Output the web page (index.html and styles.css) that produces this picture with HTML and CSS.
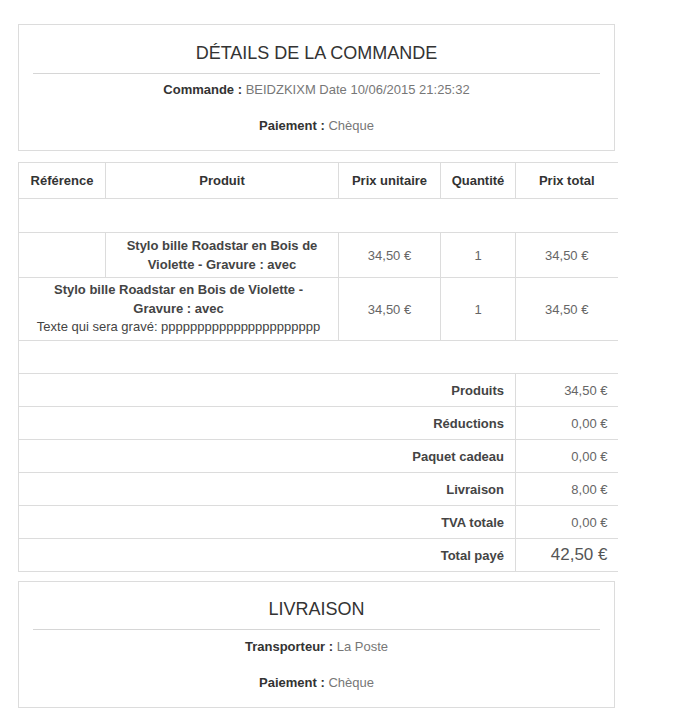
FILE: index.html
```html
<!DOCTYPE html>
<html lang="fr">
<head>
<meta charset="utf-8">
<title>Détails de la commande</title>
<link rel="stylesheet" href="styles.css">
</head>
<body>
<div class="page">
  <section class="box box-order">
    <h2 class="box-title">DÉTAILS DE LA COMMANDE</h2>
    <div class="box-rule"></div>
    <p class="info"><b>Commande :</b> <span>BEIDZKIXM Date 10/06/2015 21:25:32</span></p>
    <p class="info"><b>Paiement :</b> <span>Chèque</span></p>
  </section>

  <table class="order">
    <colgroup>
      <col class="c-ref"><col class="c-prod"><col class="c-pu"><col class="c-qty"><col class="c-pt">
    </colgroup>
    <thead>
      <tr class="head">
        <th>Référence</th>
        <th>Produit</th>
        <th>Prix unitaire</th>
        <th>Quantité</th>
        <th>Prix total</th>
      </tr>
    </thead>
    <tbody>
      <tr class="empty first"><td colspan="5"></td></tr>
      <tr class="item item-1">
        <td></td>
        <td class="prod"><b>Stylo bille Roadstar en Bois de Violette - Gravure : avec</b></td>
        <td class="num">34,50 €</td>
        <td class="num">1</td>
        <td class="num">34,50 €</td>
      </tr>
      <tr class="item item-2">
        <td colspan="2" class="prod"><b class="prod-name">Stylo bille Roadstar en Bois de Violette - Gravure : avec</b><span class="custom">Texte qui sera gravé: pppppppppppppppppppppp</span></td>
        <td class="num">34,50 €</td>
        <td class="num">1</td>
        <td class="num">34,50 €</td>
      </tr>
      <tr class="empty"><td colspan="5"></td></tr>
      <tr class="total"><td colspan="4" class="lbl">Produits</td><td class="val">34,50 €</td></tr>
      <tr class="total"><td colspan="4" class="lbl">Réductions</td><td class="val">0,00 €</td></tr>
      <tr class="total"><td colspan="4" class="lbl">Paquet cadeau</td><td class="val">0,00 €</td></tr>
      <tr class="total"><td colspan="4" class="lbl">Livraison</td><td class="val">8,00 €</td></tr>
      <tr class="total"><td colspan="4" class="lbl">TVA totale</td><td class="val">0,00 €</td></tr>
      <tr class="total grand"><td colspan="4" class="lbl">Total payé</td><td class="val">42,50 €</td></tr>
    </tbody>
  </table>

  <section class="box box-ship">
    <h2 class="box-title">LIVRAISON</h2>
    <div class="box-rule"></div>
    <p class="info"><b>Transporteur :</b> <span>La Poste</span></p>
    <p class="info"><b>Paiement :</b> <span>Chèque</span></p>
  </section>
</div>
</body>
</html>
```

FILE: styles.css
```css
* { box-sizing: border-box; }
html, body { margin: 0; padding: 0; background: #fff; }
body {
  font-family: "Liberation Sans", Arial, sans-serif;
  font-size: 13px;
  color: #333;
}
.page {
  width: 617px;
  padding: 24px 0 0 18px;
  display: flex;
  flex-direction: column;
}
.box {
  width: 597px;
  border: 1px solid #dcdcdc;
  display: flex;
  flex-direction: column;
  align-items: center;
  padding: 17px 14px 16px;
}
.box-title {
  margin: 0;
  font-size: 18px;
  font-weight: normal;
  line-height: 22px;
  color: #333;
}
.box-rule {
  align-self: stretch;
  height: 1px;
  background: #d6d6d6;
  margin: 9px 0 8px;
}
.info {
  margin: 0;
  line-height: 16px;
  color: #333;
}
.info + .info { margin-top: 20px; }
.info b { font-weight: bold; }
.info span { color: #777; }

.order {
  margin-top: 11px;
  width: 599px;
  border-collapse: collapse;
  table-layout: fixed;
  border-left: 1px solid #dcdcdc;
}
.c-ref { width: 87px; }
.c-prod { width: 233px; }
.c-pu { width: 102px; }
.c-qty { width: 75px; }
.c-pt { width: 102px; }
.order th, .order td {
  border-top: 1px solid #dcdcdc;
  border-bottom: 1px solid #dcdcdc;
  padding: 0 8px;
  text-align: center;
  vertical-align: middle;
}
.order th + th, .order td + td { border-left: 1px solid #dcdcdc; }
.head th {
  height: 36px;
  font-weight: bold;
  color: #333;
  padding: 0 4px;
}
.empty td { height: 33px; }
.empty.first td { height: 34px; }
.prod { line-height: 19px; color: #444; }
.prod b { font-weight: bold; }
.item-1 td { height: 45px; }
.item-1 .prod { padding: 0 14px; }
.item-2 td { height: 63px; }
.item-2 .prod { padding: 0 2px; line-height: 18.5px; }
.prod-name { display: block; padding: 0 24px; }
.custom { display: block; white-space: nowrap; color: #444; font-weight: normal; }
.num { color: #666; }
.total td { height: 33px; }
.lbl { text-align: right !important; font-weight: bold; color: #444; padding-right: 11px !important; }
.val { text-align: right !important; color: #666; padding-right: 10px !important; }
.grand .val { font-size: 17px; color: #555; }

.box-ship {
  margin-top: 9px;
  padding-top: 16px;
}
.box-ship .box-rule { margin-bottom: 9px; }
```
